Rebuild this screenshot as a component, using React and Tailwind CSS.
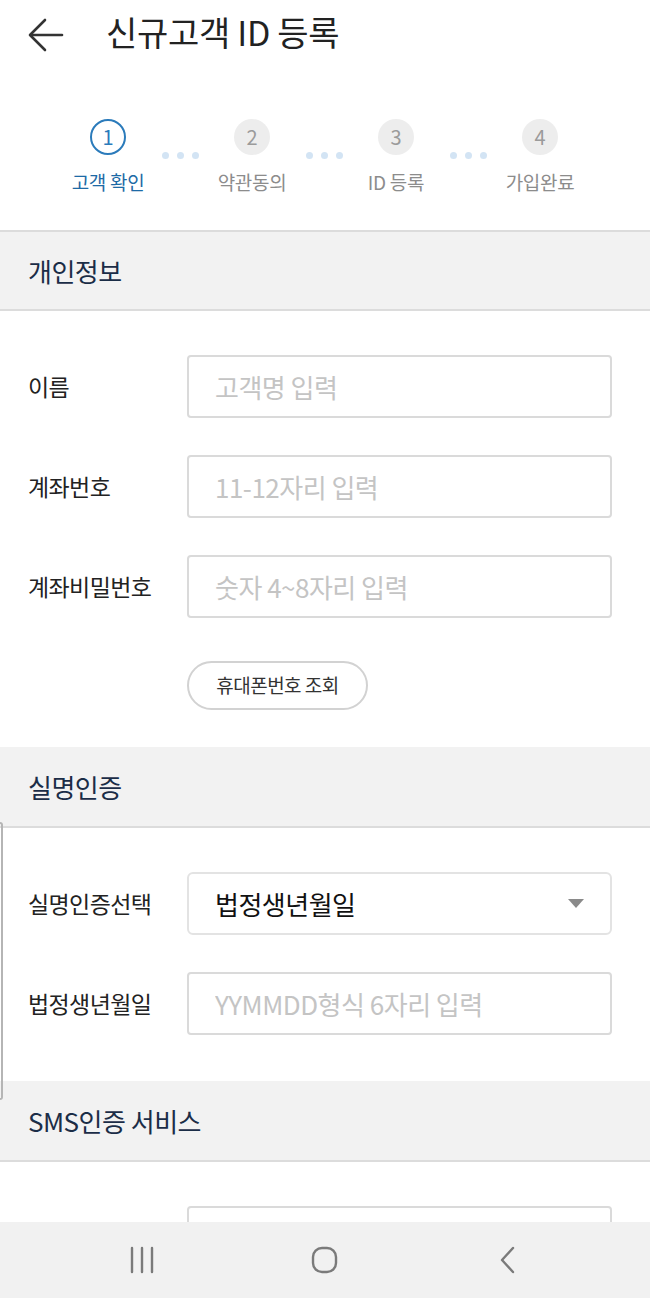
import { useState } from 'react';

const font = { fontFamily: '"Noto Sans CJK KR", "Noto Sans", sans-serif' };

const steps = [
  { num: 1, label: '고객 확인', active: true },
  { num: 2, label: '약관동의' },
  { num: 3, label: 'ID 등록' },
  { num: 4, label: '가입완료' },
];

const Dots = () => (
  <div className="w-[72px] flex items-start justify-center gap-[8px] pt-[33px]">
    <span className="w-[7px] h-[7px] rounded-full bg-[#d3e4f4]"></span>
    <span className="w-[7px] h-[7px] rounded-full bg-[#d3e4f4]"></span>
    <span className="w-[7px] h-[7px] rounded-full bg-[#d3e4f4]"></span>
  </div>
);

const SectionHeader = ({ title, topBorder }) => (
  <div className={`h-[81px] bg-[#f2f2f2] border-b-2 border-[#dcdcdc] flex items-center px-[28px] ${topBorder ? 'border-t-2' : ''}`}>
    <h2 className="text-[26px] text-[#1b2d47] leading-none tracking-[-0.5px]">{title}</h2>
  </div>
);

const Row = ({ label, children }) => (
  <div className="flex items-center">
    <label className="w-[159px] text-[23px] text-[#222] whitespace-nowrap tracking-[-0.6px]">{label}</label>
    {children}
  </div>
);

const TextInput = ({ placeholder, value, onChange }) => (
  <input
    value={value}
    onChange={onChange}
    placeholder={placeholder}
    className="w-[425px] h-[63px] border-2 border-[#dadada] rounded-[4px] px-[26px] text-[26px] tracking-[-0.5px] text-[#222] placeholder:text-[#c4c4c4] outline-none bg-white"
    style={font}
  />
);

const App = () => {
  const [form, setForm] = useState({ name: '', account: '', pw: '', birth: '' });
  const set = (k) => (e) => setForm({ ...form, [k]: e.target.value });

  return (
    <div className="w-[650px] h-[1298px] flex flex-col bg-white relative overflow-hidden" style={font}>
      <div className="flex-1 overflow-hidden">
        {/* Header */}
        <div className="h-[72px] flex items-center px-[28px] pb-[2px]">
          <svg width="36" height="34" viewBox="0 0 36 34" fill="none" stroke="#333" strokeWidth="2.6" strokeLinecap="round" strokeLinejoin="round">
            <path d="M34 17H3" />
            <path d="M17 2L2 17l15 15" />
          </svg>
          <h1 className="ml-[42px] -mt-[6px] text-[34px] text-[#222] leading-none tracking-[-0.3px]">신규고객 ID 등록</h1>
        </div>

        {/* Steps */}
        <div className="h-[158px] flex pl-[72px] pt-[47px]">
          {steps.map((s, i) => (
            <div key={s.num} className="flex items-start">
              <div className="w-[72px] flex flex-col items-center">
                <div
                  className={`w-[36px] h-[36px] rounded-full flex items-center justify-center text-[20px] leading-none ${
                    s.active ? 'border-2 border-[#2b7bbb] bg-white text-[#2b7bbb]' : 'bg-[#ededed] text-[#9b9b9b]'
                  }`}
                >
                  {s.num}
                </div>
                <span className={`mt-[17px] text-[19px] whitespace-nowrap leading-none tracking-[-0.3px] ${s.active ? 'text-[#1d6aa6]' : 'text-[#8c8c8c]'}`}>
                  {s.label}
                </span>
              </div>
              {i < steps.length - 1 && <Dots />}
            </div>
          ))}
        </div>

        {/* 개인정보 */}
        <SectionHeader title="개인정보" topBorder />
        <div className="px-[28px] pt-[44px] pb-[37px] flex flex-col gap-[37px]">
          <Row label="이름">
            <TextInput placeholder="고객명 입력" value={form.name} onChange={set('name')} />
          </Row>
          <Row label="계좌번호">
            <TextInput placeholder="11-12자리 입력" value={form.account} onChange={set('account')} />
          </Row>
          <Row label="계좌비밀번호">
            <TextInput placeholder="숫자 4~8자리 입력" value={form.pw} onChange={set('pw')} />
          </Row>
          <div className="pl-[159px] mt-[6px]">
            <button className="h-[49px] w-[181px] rounded-full border-2 border-[#d2d2d2] text-[19px] tracking-[-0.5px] text-[#333] bg-white" style={font}>
              휴대폰번호 조회
            </button>
          </div>
        </div>

        {/* 실명인증 */}
        <SectionHeader title="실명인증" />
        <div className="px-[28px] pt-[44px] pb-[46px] flex flex-col gap-[37px]">
          <Row label="실명인증선택">
            <div className="w-[425px] h-[63px] border-2 border-[#e3e3e3] rounded-[6px] px-[26px] flex items-center justify-between">
              <span className="text-[26px] text-[#111] tracking-[-0.5px]">법정생년월일</span>
              <svg width="16" height="9" viewBox="0 0 16 9">
                <path d="M0 0h16L8 9z" fill="#8a8a8a" />
              </svg>
            </div>
          </Row>
          <Row label="법정생년월일">
            <TextInput placeholder="YYMMDD형식 6자리 입력" value={form.birth} onChange={set('birth')} />
          </Row>
        </div>

        {/* SMS인증 서비스 */}
        <SectionHeader title="SMS인증 서비스" />
        <div className="px-[28px] pt-[44px]">
          <Row label="">
            <div className="w-[425px] h-[63px] border-2 border-[#dadada] rounded-[4px]"></div>
          </Row>
        </div>
      </div>

      {/* left edge artifact */}
      <div className="absolute left-0 top-[822px] w-[3px] h-[278px] border-r-2 border-y-2 border-[#b5b5b5] rounded-r-[4px]"></div>

      {/* Navigation bar */}
      <div className="h-[76px] bg-[#f1f1f1] flex items-center px-[50px]">
        <div className="w-[183px] flex justify-center">
          <svg width="26" height="28" viewBox="0 0 26 28" stroke="#7a7a7a" strokeWidth="2.4" strokeLinecap="round">
            <path d="M3 2v24M13 2v24M23 2v24" />
          </svg>
        </div>
        <div className="w-[183px] flex justify-center">
          <svg width="28" height="28" viewBox="0 0 28 28" fill="none" stroke="#7a7a7a" strokeWidth="2.4">
            <rect x="2" y="2" width="23" height="24" rx="9" />
          </svg>
        </div>
        <div className="w-[183px] flex justify-center">
          <svg width="20" height="28" viewBox="0 0 20 28" fill="none" stroke="#7a7a7a" strokeWidth="2.4" strokeLinecap="round" strokeLinejoin="round">
            <path d="M15 2L4 14l11 12" />
          </svg>
        </div>
      </div>
    </div>
  );
};

export default App;
